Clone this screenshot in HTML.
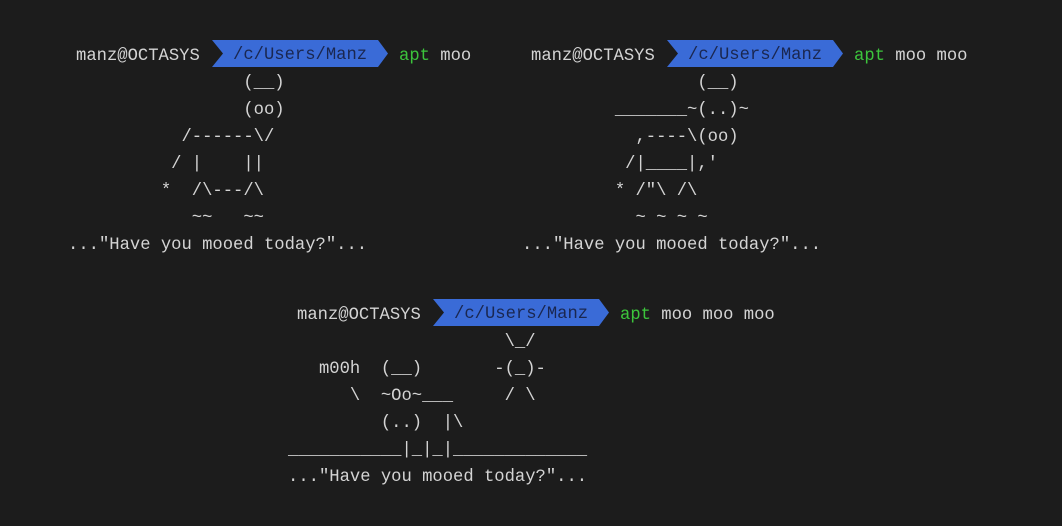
<!DOCTYPE html>
<html><head><meta charset="utf-8"><style>
html,body{margin:0;padding:0;background:#1c1c1c;width:1062px;height:526px;overflow:hidden}
.t{position:absolute;font-family:"Liberation Mono","DejaVu Sans Mono",monospace;font-size:17.2px;line-height:27px;color:#d4d4d4;white-space:pre;margin:0}
.g{color:#3cc43c}
.arr{position:absolute;width:176px;height:27px}
.arr span{position:absolute;left:21px;top:2px;font-family:"Liberation Mono",monospace;font-size:17.2px;line-height:27px;color:#1a2750;white-space:pre}
</style></head><body>

<div class="t" style="left:76px;top:43px">manz@OCTASYS</div>
<div class="arr" style="left:212px;top:40px"><svg width="176" height="27" style="position:absolute;left:0;top:0"><polygon points="0,0 166,0 176,13.5 166,27 0,27 11,13.5" fill="#3a6bd7"/></svg><span>/c/Users/Manz</span></div>
<div class="t" style="left:399px;top:43px"><span class="g">apt</span> moo</div>
<pre class="t" style="left:68px;top:70px">                 (__)
                 (oo)
           /------\/
          / |    ||
         *  /\---/\
            ~~   ~~
..."Have you mooed today?"...</pre>

<div class="t" style="left:531px;top:43px">manz@OCTASYS</div>
<div class="arr" style="left:667px;top:40px"><svg width="176" height="27" style="position:absolute;left:0;top:0"><polygon points="0,0 166,0 176,13.5 166,27 0,27 11,13.5" fill="#3a6bd7"/></svg><span>/c/Users/Manz</span></div>
<div class="t" style="left:854px;top:43px"><span class="g">apt</span> moo moo</div>
<pre class="t" style="left:522px;top:70px">                 (__)
         _______~(..)~
           ,----\(oo)
          /|____|,'
         * /"\ /\
           ~ ~ ~ ~
..."Have you mooed today?"...</pre>

<div class="t" style="left:297px;top:302px">manz@OCTASYS</div>
<div class="arr" style="left:433px;top:299px"><svg width="176" height="27" style="position:absolute;left:0;top:0"><polygon points="0,0 166,0 176,13.5 166,27 0,27 11,13.5" fill="#3a6bd7"/></svg><span>/c/Users/Manz</span></div>
<div class="t" style="left:620px;top:302px"><span class="g">apt</span> moo moo moo</div>
<pre class="t" style="left:288px;top:329px">                     \_/
   m00h  (__)       -(_)-
      \  ~Oo~___     / \
         (..)  |\
___________|_|_|_____________
..."Have you mooed today?"...</pre>

</body></html>
